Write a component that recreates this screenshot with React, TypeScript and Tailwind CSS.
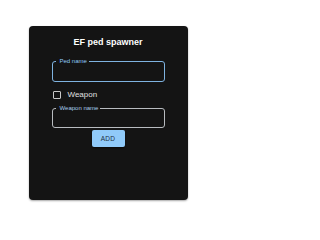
export default function App() {
  return (
    <div className="flex h-[229px] w-[216px] items-start justify-center bg-white pt-[26px] font-['Liberation_Sans',Arial,sans-serif]">
      <div className="flex h-[174px] w-[159px] flex-col rounded-[4px] bg-[#141414] px-[23px] pt-[11px] shadow-[0_1px_2px_rgba(0,0,0,0.35)]">
        <h1 className="text-center text-[9px] font-bold leading-[11px] text-white">
          EF ped spawner
        </h1>

        <fieldset className="mt-[10px] h-[24px] rounded-[3px] border border-[#7fb3e0]">
          <legend className="ml-[3px] pl-[4px] pr-[2px] text-[6px] leading-[6px] text-[#90caf9]">
            Ped name
          </legend>
        </fieldset>

        <label className="mt-[7px] flex h-[11px] items-center">
          <span className="ml-[1px] h-[8px] w-[8px] rounded-[1px] border border-[#c8c8c8]" />
          <span className="ml-[7px] text-[8px] leading-[11px] text-[#e0e0e0]">Weapon</span>
        </label>

        <fieldset className="mt-[5px] h-[23px] rounded-[3px] border border-[#b8bcc0]">
          <legend className="ml-[3px] pl-[4px] pr-[2px] text-[6px] leading-[6px] text-[#a9cdf0]">
            Weapon name
          </legend>
        </fieldset>

        <div className="mt-[2px] flex justify-center">
          <button className="h-[17px] w-[33px] rounded-[2px] bg-[#90caf9] text-[6.5px] leading-[17px] tracking-[0.3px] text-[#203040] shadow-[0_1px_2px_rgba(0,0,0,0.6)]">
            ADD
          </button>
        </div>
      </div>
    </div>
  );
}
